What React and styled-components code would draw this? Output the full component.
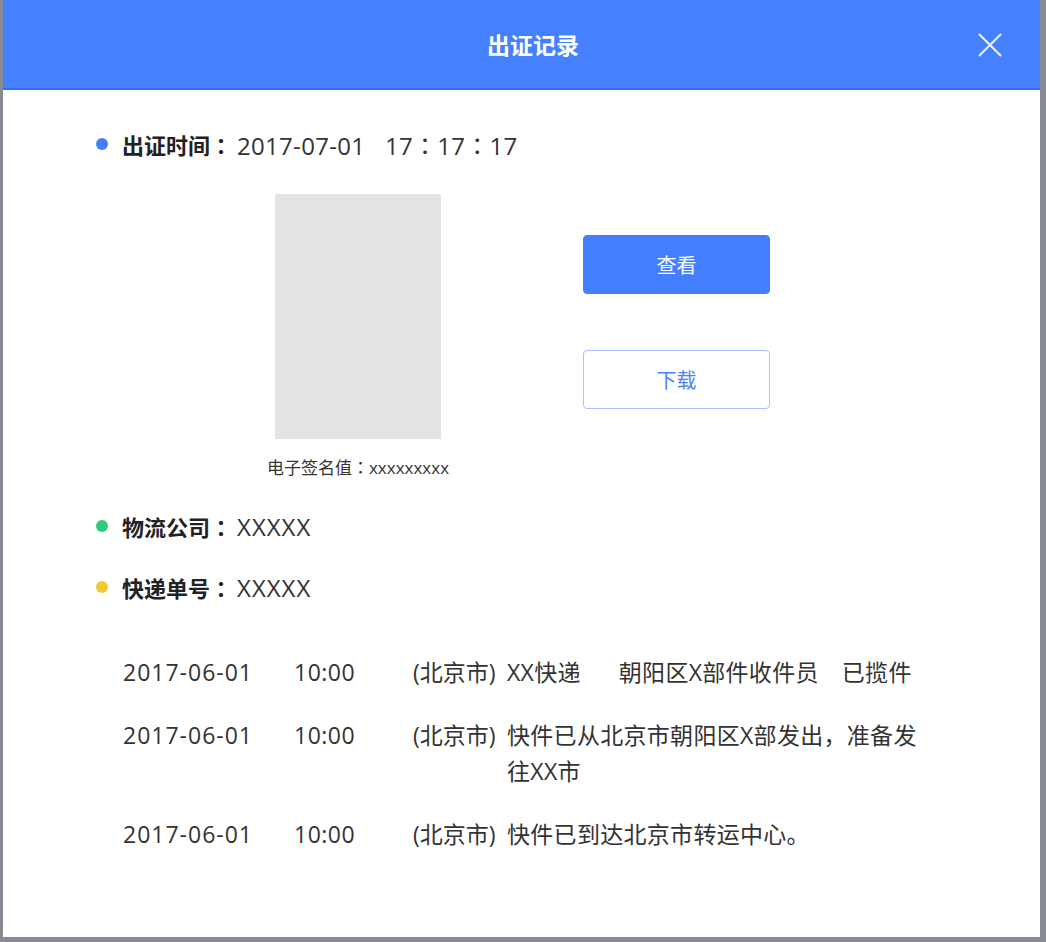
import React from 'react';
import styled, { createGlobalStyle } from 'styled-components';

const GlobalStyle = createGlobalStyle`
  html, body {
    margin: 0;
    padding: 0;
    background: #878a93;
  }
  body {
    font-family: "Open Sans", "Noto Sans CJK SC", sans-serif;
    color: #333;
  }
`;

const Backdrop = styled.div`
  width: 1046px;
  height: 942px;
  box-sizing: border-box;
  padding: 0 6px 5px 3px;
  background: #878a93;
`;

const Modal = styled.div`
  height: 100%;
  background: #fff;
  display: flex;
  flex-direction: column;
`;

const Header = styled.div`
  height: 88px;
  background: #4580ff;
  border-bottom: 2px solid #2a6ffe;
  display: flex;
  align-items: center;
  justify-content: center;
  position: relative;
`;

const Title = styled.h2`
  margin: 0 0 0 23px;
  font-family: "Noto Sans CJK SC", sans-serif;
  font-size: 23px;
  font-weight: 700;
  color: #fff;
`;

const Close = styled.button`
  position: absolute;
  right: 36px;
  top: 31px;
  width: 28px;
  height: 28px;
  padding: 0;
  border: 0;
  background: transparent;
  cursor: pointer;
`;

const Body = styled.div`
  padding: 39px 0 0 93px;
`;

const InfoRow = styled.div`
  display: flex;
  align-items: center;
  height: 30px;
  font-size: 22px;
  margin-top: ${p => p.gap || 0}px;
`;

const Dot = styled.span`
  width: 12px;
  height: 12px;
  border-radius: 50%;
  background: ${p => p.color};
  margin: 0 14px 0 0;
`;

const Label = styled.span`
  font-family: "Noto Sans CJK SC", sans-serif;
  font-weight: 700;
  color: #222;
`;

// centred full-width punctuation, as in the reference
const Punct = styled.span`
  font-family: "Noto Sans CJK TC", sans-serif;
`;

const Value = styled.span`
  margin-left: 5px;
  color: #333;
  font-size: 24px;
  letter-spacing: ${p => p.spacing || 0.3}px;
  white-space: pre;
`;

const Evidence = styled.div`
  display: flex;
  margin: 35px 0 0 162px;
`;

const Figure = styled.div`
  width: 200px;
  display: flex;
  flex-direction: column;
  align-items: center;
`;

const Preview = styled.div`
  width: 166px;
  height: 245px;
  background: #e3e3e3;
`;

const Caption = styled.div`
  margin-top: 16px;
  font-size: 17px;
  line-height: 24px;
  color: #333;
`;

const Actions = styled.div`
  margin: 41px 0 0 125px;
  display: flex;
  flex-direction: column;
  gap: 56px;
`;

const Button = styled.button`
  width: 187px;
  height: 59px;
  border-radius: 4px;
  font-family: "Noto Sans CJK SC", sans-serif;
  font-size: 20px;
  cursor: pointer;
  border: 1px solid ${p => (p.primary ? '#437eff' : '#a9c3ff')};
  background: ${p => (p.primary ? '#437eff' : '#fff')};
  color: ${p => (p.primary ? '#fff' : '#4a82ff')};
`;

const Track = styled.div`
  margin: 52px 0 0 27px;
  display: flex;
  flex-direction: column;
  gap: 27px;
`;

const TrackRow = styled.div`
  display: grid;
  grid-template-columns: 171px 119px 94px 414px;
  font-size: 23px;
  line-height: 36px;
  color: #333;
`;

const Stamp = styled.span`
  letter-spacing: ${p => p.spacing}px;
`;

const Desc = styled.span`
  letter-spacing: 0.3px;
`;

const Spaced = styled.span`
  margin-left: ${p => p.space}px;
`;

const CloseIcon = () => (
  <svg width="28" height="28" viewBox="0 0 28 28">
    <path d="M3 3 L25 25 M25 3 L3 25" stroke="#fff" strokeWidth="2" strokeOpacity="0.9" />
  </svg>
);

const tracks = [
  {
    date: '2017-06-01',
    time: '10:00',
    desc: (
      <>
        XX快递<Spaced space={38}>朝阳区X部件收件员</Spaced>
        <Spaced space={23}>已揽件</Spaced>
      </>
    )
  },
  {
    date: '2017-06-01',
    time: '10:00',
    desc: '快件已从北京市朝阳区X部发出，准备发往XX市'
  },
  { date: '2017-06-01', time: '10:00', desc: '快件已到达北京市转运中心。' }
];

const App = () => (
  <Backdrop>
    <GlobalStyle />
    <Modal>
      <Header>
        <Title>出证记录</Title>
        <Close aria-label="close">
          <CloseIcon />
        </Close>
      </Header>
      <Body>
        <InfoRow>
          <Dot color="#437eff" />
          <Label>
            出证时间<Punct>：</Punct>
          </Label>
          <Value>
            2017-07-01{'   '}17<Punct>：</Punct>17<Punct>：</Punct>17
          </Value>
        </InfoRow>
        <Evidence>
          <Figure>
            <Preview />
            <Caption>
              电子签名值<Punct>：</Punct>xxxxxxxxx
            </Caption>
          </Figure>
          <Actions>
            <Button primary>查看</Button>
            <Button>下载</Button>
          </Actions>
        </Evidence>
        <InfoRow gap={31}>
          <Dot color="#2dc97c" />
          <Label>
            物流公司<Punct>：</Punct>
          </Label>
          <Value spacing={1}>XXXXX</Value>
        </InfoRow>
        <InfoRow gap={31}>
          <Dot color="#f6c72a" />
          <Label>
            快递单号<Punct>：</Punct>
          </Label>
          <Value spacing={1}>XXXXX</Value>
        </InfoRow>
        <Track>
          {tracks.map((t, i) => (
            <TrackRow key={i}>
              <Stamp spacing={1}>{t.date}</Stamp>
              <Stamp spacing={0.5}>{t.time}</Stamp>
              <span>(北京市)</span>
              <Desc>{t.desc}</Desc>
            </TrackRow>
          ))}
        </Track>
      </Body>
    </Modal>
  </Backdrop>
);

export default App;
